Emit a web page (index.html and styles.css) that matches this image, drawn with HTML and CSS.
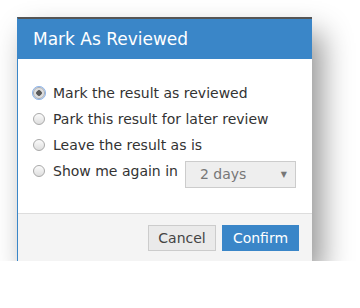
FILE: index.html
```html
<!DOCTYPE html>
<html lang="en">
<head>
    <meta charset="UTF-8">
    <title>Mark As Reviewed</title>
    <link rel="stylesheet" href="styles.css">
</head>
<body>
    <div class="dialog">
        <header class="dialog-header">
            <h1>Mark As Reviewed</h1>
        </header>

        <form class="dialog-body">
            <label class="option"><input type="radio" name="review" class="focused" checked> Mark the result as reviewed</label>
            <label class="option"><input type="radio" name="review"> Park this result for later review</label>
            <label class="option"><input type="radio" name="review"> Leave the result as is</label>
            <label class="option"><input type="radio" name="review"> Show me again in
                <span class="select">2 days <span class="arrow">&#9660;</span></span>
            </label>
        </form>

        <footer class="dialog-footer">
            <button type="button" class="btn cancel">Cancel</button>
            <button type="button" class="btn confirm">Confirm</button>
        </footer>
    </div>
</body>
</html>
```
FILE: styles.css
```css
body {
    font-family: "DejaVu Sans", Verdana, sans-serif;
    background-color: #ffffff;
    margin: 0;
    padding: 17px 0 0 17px;
}

.dialog {
    width: 294px;
    background-color: #ffffff;
    border-top: 2px solid #555555;
    border-left: 1px solid #3a86c8;
    box-shadow: 10px 16px 28px rgba(0, 0, 0, 0.42);
}

.dialog-header {
    background-color: #3a86c8;
    height: 40px;
    display: flex;
    align-items: center;
    padding-left: 15px;
}

.dialog-header h1 {
    margin: 0;
    font-size: 17px;
    font-weight: normal;
    color: #ffffff;
}

.dialog-body {
    padding: 21px 0 29px 15px;
    display: flex;
    flex-direction: column;
}

.option {
    display: flex;
    align-items: center;
    font-size: 14px;
    color: #333333;
    height: 26px;
    white-space: nowrap;
}

.option input {
    appearance: none;
    -webkit-appearance: none;
    margin: 0 8px 0 0;
    width: 12px;
    height: 12px;
    box-sizing: border-box;
    border: 1px solid #a9a9a9;
    border-radius: 50%;
    background: linear-gradient(#fbfbfb, #dedede);
}

.option input:checked {
    background: radial-gradient(circle, #5a5a5a 0 2.5px, #d9d9d9 3px, #ececec 100%);
}

.option input.focused {
    outline: 1px solid #8fb5ea;
    outline-offset: 0;
    box-shadow: 0 0 0 1px #d4e3f8;
}

.select {
    margin: 6px 0 0 7px;
    width: 111px;
    height: 27px;
    box-sizing: border-box;
    border: 1px solid #cccccc;
    background-color: #eeeeee;
    color: #777777;
    display: flex;
    align-items: center;
    justify-content: space-between;
    padding: 0 8px 0 14px;
}

.arrow {
    font-size: 8px;
    color: #777777;
}

.dialog-footer {
    background-color: #f4f4f4;
    border-top: 1px solid #dddddd;
    height: 47px;
    display: flex;
    align-items: center;
    justify-content: flex-end;
    gap: 6px;
    padding-right: 13px;
}

.btn {
    font-family: "DejaVu Sans", Verdana, sans-serif;
    font-size: 14px;
    height: 26px;
    padding: 0;
    border-radius: 0;
    cursor: pointer;
}

.cancel {
    background-color: #eaeaea;
    border: 1px solid #cccccc;
    color: #444444;
    width: 68px;
}

.confirm {
    background-color: #3a86c8;
    border: 1px solid #3a86c8;
    color: #ffffff;
    width: 77px;
}
```
